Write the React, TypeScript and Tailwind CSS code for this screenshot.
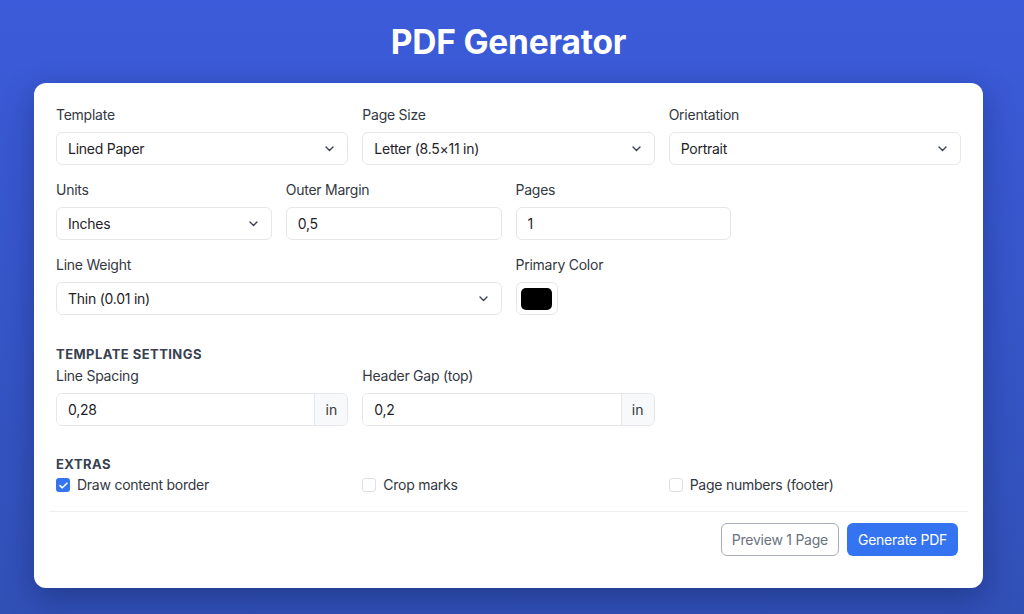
import React from 'react';

const font = { fontFamily: 'Inter, "Noto Sans", "Liberation Sans", sans-serif' };

function Chevron() {
  return (
    <svg
      className="pointer-events-none absolute right-[14px] top-1/2 -translate-y-1/2"
      width="9"
      height="6"
      viewBox="0 0 9 6"
      fill="none"
    >
      <path d="M1 1l3.5 3.5L8 1" stroke="#374151" strokeWidth="1.4" strokeLinecap="round" strokeLinejoin="round" />
    </svg>
  );
}

function Label({ children }: { children: React.ReactNode }) {
  return <div className="mb-[7px] text-[14px] leading-5 tracking-[-0.25px] text-[#333842]">{children}</div>;
}

function SelectField({ label, value }: { label: string; value: string }) {
  return (
    <div>
      <Label>{label}</Label>
      <div className="relative">
        <select
          defaultValue={value}
          className="h-[33px] w-full appearance-none rounded-md border border-[#e5e7eb] bg-white pl-[11px] pr-8 text-[14px] tracking-[-0.25px] text-[#1f2328] outline-none"
        >
          <option>{value}</option>
        </select>
        <Chevron />
      </div>
    </div>
  );
}

function TextField({ label, value }: { label: string; value: string }) {
  return (
    <div>
      <Label>{label}</Label>
      <input
        defaultValue={value}
        className="h-[33px] w-full rounded-md border border-[#e5e7eb] bg-white px-[11px] text-[14px] tracking-[-0.25px] text-[#1f2328] outline-none"
      />
    </div>
  );
}

function UnitField({ label, value }: { label: string; value: string }) {
  return (
    <div>
      <Label>{label}</Label>
      <div className="flex h-[33px] overflow-hidden rounded-md border border-[#e5e7eb]">
        <input
          defaultValue={value}
          className="min-w-0 flex-1 bg-white px-[11px] text-[14px] tracking-[-0.25px] text-[#1f2328] outline-none"
        />
        <span className="flex w-[33px] items-center justify-center border-l border-[#e5e7eb] bg-[#f8f9fa] text-[14px] text-[#333842]">
          in
        </span>
      </div>
    </div>
  );
}

function Check({ label, checked }: { label: string; checked?: boolean }) {
  return (
    <label className="flex items-center gap-[7px] text-[14px] leading-5 tracking-[-0.25px] text-[#333842]">
      {checked ? (
        <span className="flex h-[14px] w-[14px] items-center justify-center rounded-[3px] bg-[#3474f0]">
          <svg width="9" height="7" viewBox="0 0 9 7" fill="none">
            <path d="M1 3.6l2.3 2.2L8 1.2" stroke="white" strokeWidth="1.6" strokeLinecap="round" strokeLinejoin="round" />
          </svg>
        </span>
      ) : (
        <span className="h-[14px] w-[14px] rounded-[3px] border border-[#dcdfe4] bg-white" />
      )}
      {label}
    </label>
  );
}

function SectionTitle({ children }: { children: React.ReactNode }) {
  return (
    <div className="text-[13px] font-bold uppercase leading-[18px] tracking-[0.45px] text-[#374151]">
      {children}
    </div>
  );
}

export default function App() {
  return (
    <div className="min-h-screen w-full bg-gradient-to-b from-[#3b5bda] to-[#3150b6] pb-8" style={font}>
      <div className="ml-[34px] w-[949px] pt-[22px]">
        <h1 className="text-center text-[33.5px] font-bold leading-10 tracking-[-0.2px] text-white">PDF Generator</h1>

        <div className="mt-[21px] rounded-xl bg-white p-[15px] shadow-[0_10px_30px_rgba(10,20,70,0.35)]">
          <div className="px-[7px] pt-[7px]">
            <div className="grid grid-cols-3 gap-x-[14px]">
              <SelectField label="Template" value="Lined Paper" />
              <SelectField label="Page Size" value="Letter (8.5×11 in)" />
              <SelectField label="Orientation" value="Portrait" />
            </div>

            <div className="mt-[15px] grid grid-cols-4 gap-x-[14px]">
              <SelectField label="Units" value="Inches" />
              <TextField label="Outer Margin" value="0,5" />
              <TextField label="Pages" value="1" />
            </div>

            <div className="mt-[15px] grid grid-cols-4 gap-x-[14px]">
              <div className="col-span-2">
                <SelectField label="Line Weight" value="Thin (0.01 in)" />
              </div>
              <div>
                <Label>Primary Color</Label>
                <div className="flex h-[33px] w-[42px] items-center justify-center rounded-md border border-[#e5e7eb] bg-white">
                  <span className="h-[22px] w-[31px] rounded-[5px] bg-black" />
                </div>
              </div>
            </div>

            <div className="mt-[30px]">
              <SectionTitle>Template Settings</SectionTitle>
              <div className="mt-[3px] grid grid-cols-3 gap-x-[14px]">
                <UnitField label="Line Spacing" value="0,28" />
                <UnitField label="Header Gap (top)" value="0,2" />
              </div>
            </div>

            <div className="mt-[29px]">
              <SectionTitle>Extras</SectionTitle>
              <div className="mt-[2px] grid grid-cols-3 gap-x-[14px]">
                <Check label="Draw content border" checked />
                <Check label="Crop marks" />
                <Check label="Page numbers (footer)" />
              </div>
            </div>
          </div>

          <div className="mt-[16px] flex justify-end gap-2 border-t border-[#eceef1] pb-[17px] pr-[10px] pt-[11px]">
            <button className="h-[33px] rounded-md border border-[#a8adb5] bg-white px-[10px] text-[14px] tracking-[-0.25px] text-[#6b7280]">
              Preview 1 Page
            </button>
            <button className="h-[33px] rounded-md bg-[#3474f0] px-[11px] text-[14px] tracking-[-0.25px] text-white">
              Generate PDF
            </button>
          </div>
        </div>
      </div>
    </div>
  );
}
